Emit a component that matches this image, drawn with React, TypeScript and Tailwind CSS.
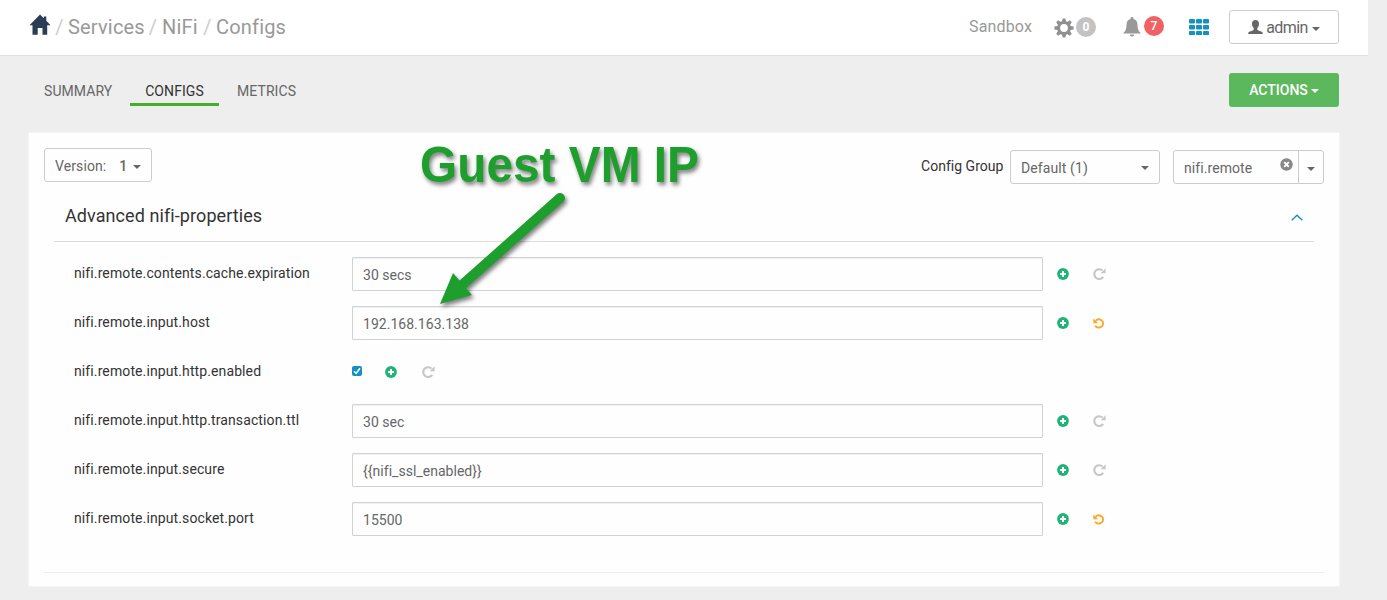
import React from "react";

type Property = { name: string; value?: string; checkbox?: boolean; changed?: boolean };

const properties: Property[] = [
  { name: "nifi.remote.contents.cache.expiration", value: "30 secs" },
  { name: "nifi.remote.input.host", value: "192.168.163.138", changed: true },
  { name: "nifi.remote.input.http.enabled", checkbox: true },
  { name: "nifi.remote.input.http.transaction.ttl", value: "30 sec" },
  { name: "nifi.remote.input.secure", value: "{{nifi_ssl_enabled}}" },
  { name: "nifi.remote.input.socket.port", value: "15500", changed: true },
];

function Caret({ className = "" }: { className?: string }) {
  return (
    <svg className={`shrink-0 ${className}`} width="8" height="4" viewBox="0 0 8 4" fill="currentColor">
      <path d="M0 0h8L4 4z" />
    </svg>
  );
}

function HomeIcon() {
  return (
    <svg width="22" height="22" viewBox="0 0 22 22" fill="#2b3c55" className="shrink-0">
      <path d="M11 .5 14.8 4.3V2.6h2.5v4.2l4.2 4.4H18.200V20.800H13.500V14H8.700v6.800H3.500V11.200H.5z" />
    </svg>
  );
}

function GearIcon() {
  return (
    <svg width="20" height="20" viewBox="-10 -10 20 20" fill="none" className="mt-0.5 shrink-0">
      <circle r="5.400" stroke="#8f8f8f" strokeWidth="3" />
      <g fill="#8f8f8f">
        {[0, 45, 90, 135, 180, 225, 270, 315].map((a) => (
          <path key={a} d="M-2.100-6-1.400-9.600H1.400L2.100-6z" transform={`rotate(${a})`} />
        ))}
      </g>
    </svg>
  );
}

function BellIcon() {
  return (
    <svg width="18" height="20" viewBox="0 0 18 20" fill="#999" className="shrink-0">
      <path d="M9 0c.9 0 1.500.6 1.500 1.500v.6c2.700.7 4 3 4 5.700 0 4.400 1 6.700 3.500 8.700H0c2.500-2 3.500-4.300 3.500-8.700 0-2.700 1.300-5 4-5.700v-.6C7.500.6 8.100 0 9 0z" />
      <path d="M6.800 17.500h4.400C11 19 10.100 19.600 9 19.600S7 19 6.800 17.500z" />
    </svg>
  );
}

function GridIcon() {
  return (
    <svg width="20" height="16" viewBox="0 0 20 16" fill="#1491c1" className="shrink-0">
      {[0, 6, 12].map((y) =>
        [0, 7, 14].map((x) => <rect key={`${x}-${y}`} x={x} y={y} width="6" height="4.400" rx="1" />),
      )}
    </svg>
  );
}

function UserIcon() {
  return (
    <svg width="15" height="14" viewBox="0 0 15 14" fill="#666" className="mb-0.5 shrink-0">
      <path d="M7.500 0c2.300 0 3.500 1.500 3.500 3.700 0 1.800-.6 3.500-1.700 4.400v1.100c0 .7.400 1 1.200 1.300l2.500.9c1.200.4 1.800 1 1.800 2.600H.2c0-1.600.6-2.200 1.800-2.600l2.500-.9c.8-.3 1.200-.6 1.200-1.300V8.100C4.600 7.200 4 5.500 4 3.700 4 1.500 5.200 0 7.500 0z" />
    </svg>
  );
}

function PlusIcon() {
  return (
    <svg width="12" height="12" viewBox="0 0 12 12" className="shrink-0">
      <circle cx="6" cy="6" r="5.900" fill="#1eb475" />
      <path d="M6 3v6M3 6h6" stroke="#fff" strokeWidth="2" />
    </svg>
  );
}

function RepeatIcon() {
  return (
    <svg width="13" height="12" viewBox="0 0 13 12" className="shrink-0">
      <path d="M10.200 8.900A4.900 4.900 0 1 1 9.500 2.500" fill="none" stroke="#c6c6c6" strokeWidth="2.100" />
      <path d="M12.600.3v5H7.600z" fill="#c6c6c6" />
    </svg>
  );
}

function UndoIcon() {
  return (
    <svg width="12" height="11" viewBox="0 0 12 11" className="shrink-0">
      <path d="M2.600 2.800C4 1.300 6.200 1 7.900 1.900A3.900 3.900 0 0 1 8 8.900C6 10 3.500 9.500 2 7.900" fill="none" stroke="#fba823" strokeWidth="1.900" />
      <path d="M.3.500v4.700H5z" fill="#fba823" />
    </svg>
  );
}

function PropertyRow({ property }: { property: Property }) {
  return (
    <div className="flex h-[34px] items-center">
      <span className="w-[278px] shrink-0 pb-0.5 text-sm leading-5 tracking-[0.11px] text-[#333]">{property.name}</span>
      {property.checkbox ? (
        <span className="mb-0.5 flex h-[10px] w-[10px] items-center justify-center rounded-[2px] bg-[#1491c1]">
          <svg width="8" height="8" viewBox="0 0 8 8" fill="none">
            <path d="M1 4.200 3.200 6.300 7 1.200" stroke="#fff" strokeWidth="1.500" />
          </svg>
        </span>
      ) : (
        <span className="flex h-[34px] w-[691px] items-center rounded-[1px] border border-[#cfd3d7] px-2.5 pt-0.5 text-sm tracking-[0.03px] text-[#666] shadow-[inset_0_1px_1px_rgba(0,0,0,0.06)]">
          {property.value}
        </span>
      )}
      <span className={property.checkbox ? "ml-[23px] flex" : "ml-3.5 flex"}>
        <PlusIcon />
      </span>
      <span className={property.checkbox ? "ml-[25px] flex" : "ml-6 flex"}>
        {property.changed ? <UndoIcon /> : <RepeatIcon />}
      </span>
    </div>
  );
}

function Header() {
  return (
    <header className="flex h-14 w-[1368px] border-b border-[#dfdfdf] bg-white pl-[29px] text-[#999]">
      <nav className="flex h-[54px] w-[940px] items-center text-xl tracking-[0.18px]">
        <span className="mb-1 flex"><HomeIcon /></span>
        <span className="w-[17px] text-center text-[#ccc]">/</span>
        <span className="w-[76px] whitespace-nowrap">Services</span>
        <span className="w-[18px] text-center text-[#ccc]">/</span>
        <span className="w-[37px]">NiFi</span>
        <span className="w-[17px] text-center text-[#ccc]">/</span>
        <span>Configs</span>
      </nav>
      <div className="flex h-[54px] items-center">
        <span className="w-[85px] text-base tracking-[0.15px]">Sandbox</span>
        <GearIcon />
        <span className="ml-0.5 flex h-5 w-5 items-center justify-center rounded-full bg-[#c3c3c3] text-xs font-bold text-white">0</span>
        <span className="ml-[27px] flex"><BellIcon /></span>
        <span className="mb-0.5 ml-[3px] flex h-5 w-5 items-center justify-center rounded-full bg-[#ef6162] text-xs font-medium text-white">7</span>
        <span className="ml-[25px] flex"><GridIcon /></span>
        <button className="ml-5 flex h-[34px] w-[110px] items-center justify-center rounded-[3px] border border-[#ccc] pt-0.5 text-base text-[#666]">
          <UserIcon />
          <span className="ml-[3px] text-base tracking-[-0.6px]">admin</span>
          <Caret className="ml-1 mt-0.5" />
        </button>
      </div>
    </header>
  );
}

function Annotation() {
  return (
    <svg className="pointer-events-none absolute left-[400px] top-[130px]" width="320" height="190" viewBox="0 0 320 190">
      <g fill="#1e9e2d" className="drop-shadow-[2px_3px_2px_rgba(0,0,0,0.5)]">
        <text x="20" y="52" fontSize="50" fontWeight="700" fontFamily="Liberation Sans, Arial, sans-serif" textLength="279" lengthAdjust="spacingAndGlyphs">
          Guest VM IP
        </text>
        <path d="M160 68 62 155" stroke="#1e9e2d" strokeWidth="10" strokeLinecap="round" />
        <path d="M40 174 53 143 72 165Z" />
      </g>
    </svg>
  );
}

export default function App() {
  return (
    <div className="relative h-[600px] w-[1387px] overflow-hidden bg-[#eee] font-['Roboto',sans-serif]">
      <Header />
      <div className="flex h-[77px] w-[1339px] justify-between pl-[29px] pt-[17px]">
        <nav className="flex pt-[5px] text-sm tracking-[0.08px] text-[#666]">
          <span className="flex h-7 w-[101px] items-center pb-[3px] pl-[15px]">SUMMARY</span>
          <span className="flex h-7 w-[89px] items-center justify-center border-b-[3px] border-[#43b02a] text-[#333]">CONFIGS</span>
          <span className="flex h-7 items-center pb-[3px] pl-[18px]">METRICS</span>
        </nav>
        <button className="flex h-[34px] w-[110px] items-center justify-center rounded-[3px] bg-[#5cb85c] text-sm font-medium text-white">
          ACTIONS
          <Caret className="ml-[3px] mt-0.5" />
        </button>
      </div>
      <main className="ml-[29px] h-[453px] w-[1310px] bg-[#fefefe] shadow-[0_0_3px_rgba(255,255,255,0.9)]">
        <div className="flex h-[51px] justify-between pl-[15px] pr-[15px] pt-[15px] text-sm">
          <button className="flex h-[34px] w-[108px] items-center rounded-[3px] border border-[#ccc] pl-2.5 pt-0.5 tracking-[0.1px] text-[#666]">
            Version:
            <span className="ml-[13px] font-medium">1</span>
            <Caret className="ml-1.5 mt-0.5" />
          </button>
          <div className="flex pt-[2px]">
            <span className="w-[89px] whitespace-nowrap pt-[6px] leading-5 tracking-[0.02px] text-[#333]">Config Group</span>
            <button className="flex h-[34px] w-[150px] items-center justify-between rounded-[3px] border border-[#ccc] px-2.5 pt-0.5 tracking-[0.1px] text-[#666]">
              Default (1)
              <Caret />
            </button>
            <div className="ml-[13px] flex h-[34px] w-[151px] rounded-[3px] border border-[#ccc] text-[#666]">
              <span className="flex w-[125px] items-center justify-between border-r border-[#ccc] pl-2.5 pr-[5px] pt-0.5 tracking-[0.08px]">
                nifi.remote
                <svg width="13" height="13" viewBox="0 0 13 13" className="mb-[7px]">
                  <circle cx="6.500" cy="6.500" r="6.200" fill="#888" />
                  <path d="m4.200 4.200 4.600 4.600m0-4.600L4.200 8.800" stroke="#fff" strokeWidth="1.900" />
                </svg>
              </span>
              <span className="flex flex-1 items-center justify-center pt-1"><Caret /></span>
            </div>
          </div>
        </div>
        <section className="mx-[15px] h-[389px] border-b border-[#eee]">
          <h2 className="mx-2.5 flex h-[58px] items-center justify-between border-b border-[#ddd] pl-[11px] pr-[11px] pt-1.5 text-lg font-normal tracking-[0.08px] text-[#333]">
            Advanced nifi-properties
            <svg width="12" height="7" viewBox="0 0 12 7" fill="none" className="mt-1">
              <path d="m.7 6.200 5.300-5 5.300 5" stroke="#1491c1" strokeWidth="1.300" />
            </svg>
          </h2>
          <div className="flex flex-col gap-[15px] pl-[30px] pt-[15px]">
            {properties.map((property) => (
              <PropertyRow key={property.name} property={property} />
            ))}
          </div>
        </section>
      </main>
      <Annotation />
    </div>
  );
}
